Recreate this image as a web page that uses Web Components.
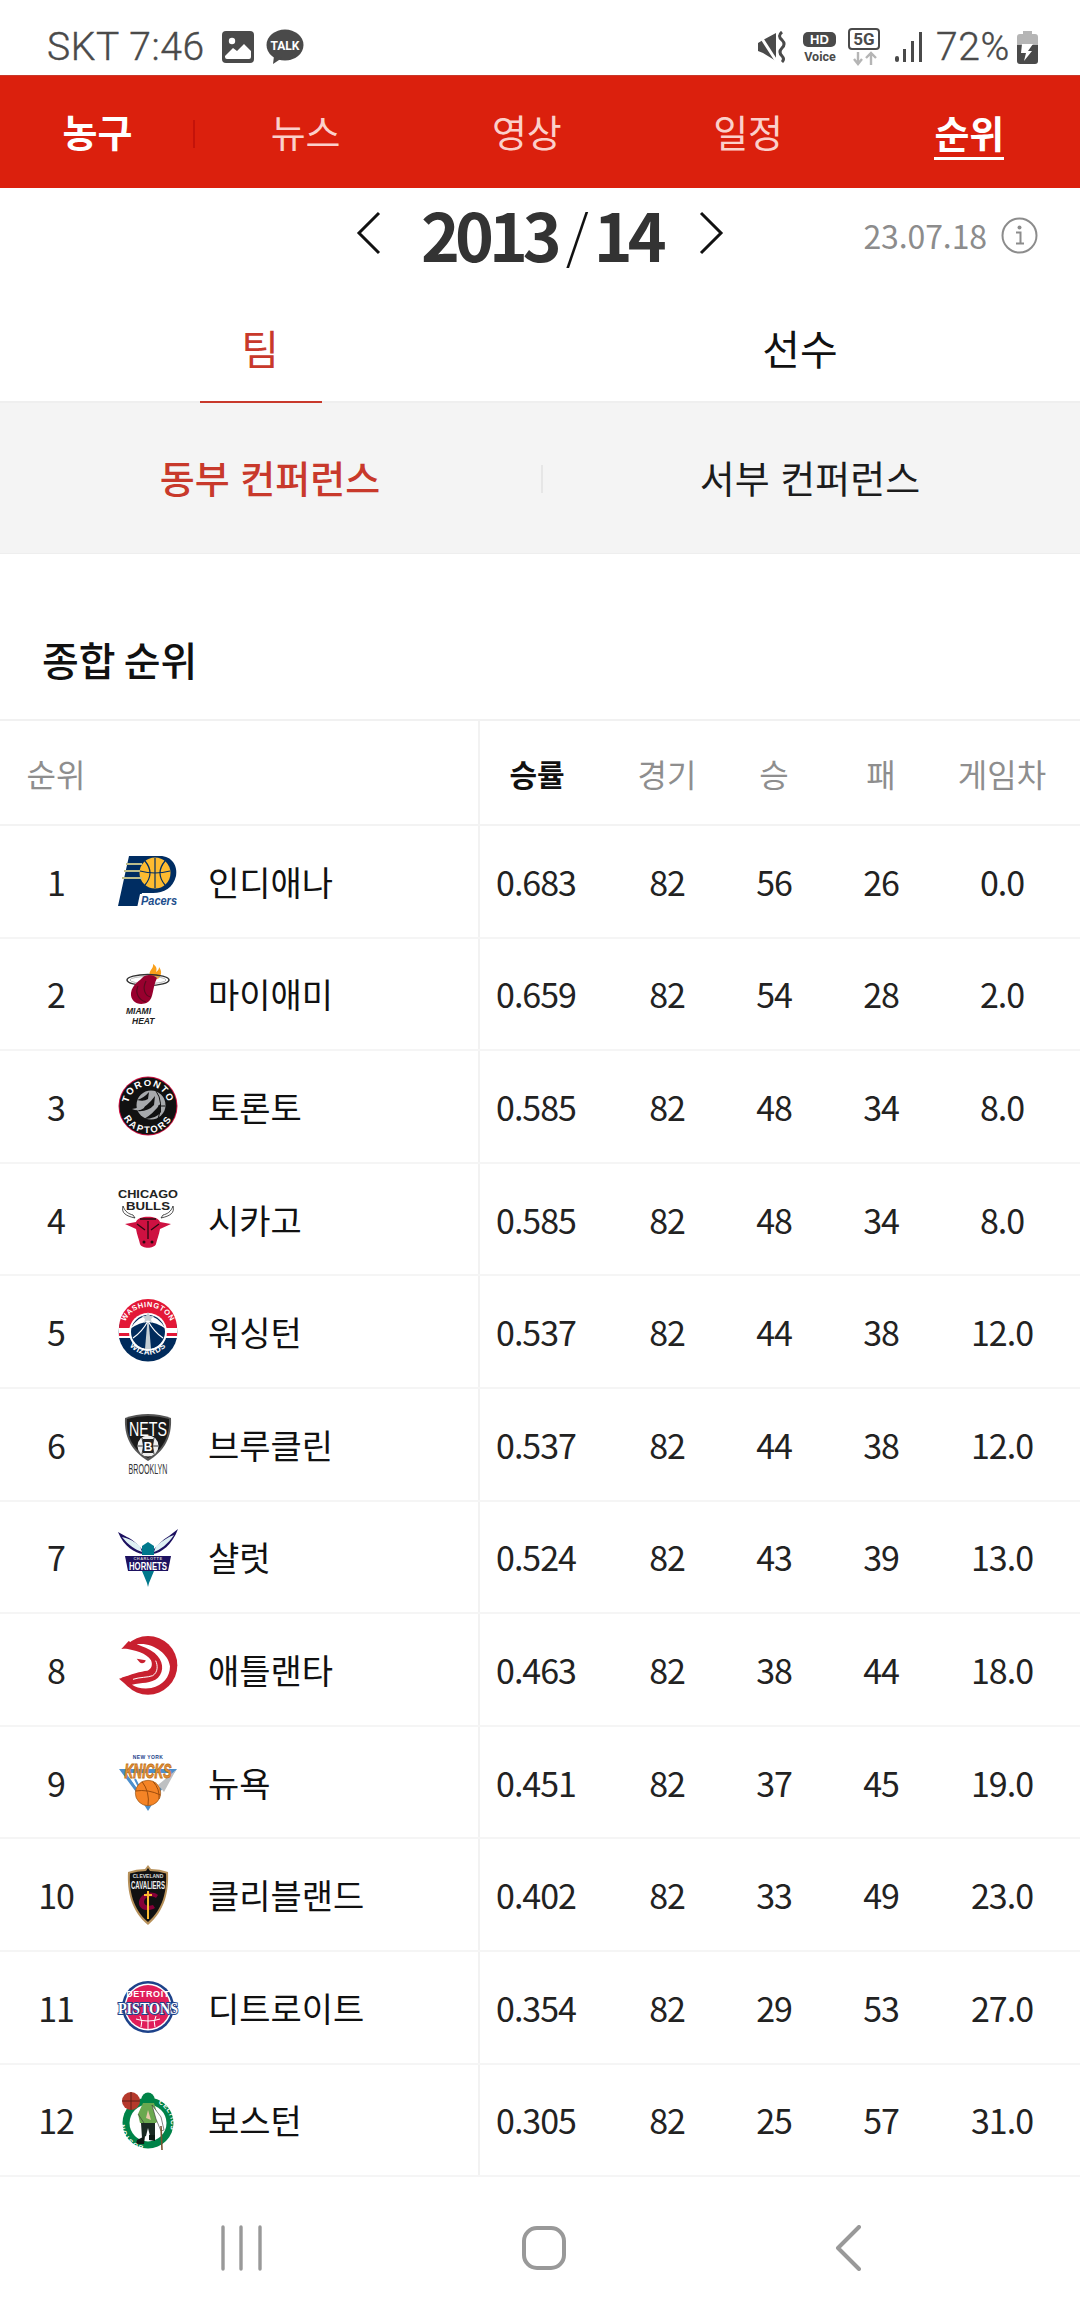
<!DOCTYPE html>
<html lang="ko">
<head>
<meta charset="utf-8">
<title>순위</title>
<style>
  html, body { margin: 0; padding: 0; background: #fff; }
  body { width: 1080px; height: 2316px; overflow: hidden; font-family: "Noto Sans CJK KR", "Noto Sans", sans-serif; }
</style>
</head>
<body>
<status-bar></status-bar>
<top-nav></top-nav>
<season-bar></season-bar>
<main-tabs></main-tabs>
<conf-tabs></conf-tabs>
<standings-table></standings-table>
<nav-bar></nav-bar>

<script>
const KR = '"Noto Sans CJK KR", "Noto Sans", sans-serif';

class StatusBar extends HTMLElement {
  constructor() {
    super();
    this.attachShadow({mode: 'open'}).innerHTML = `
      <style>
        :host { display: flex; align-items: center; height: 75px; padding: 19px 42px 0 47px; box-sizing: border-box; color: #4a4a4a; font-family: "Roboto", sans-serif; }
        .txt { font-size: 39px; line-height: 1; font-weight: 300; -webkit-text-stroke: 0.4px #4a4a4a; letter-spacing: 0.6px; }
        .left, .right { display: flex; align-items: center; }
        .right { margin-left: auto; }
        svg { display: block; }
      </style>
      <div class="left">
        <span class="txt">SKT 7:46</span>
        <svg style="margin-left:17px" width="32" height="32" viewBox="0 0 32 32"><rect width="32" height="32" rx="4" fill="#4a4a4a"/><circle cx="10" cy="10" r="3.2" fill="#fff"/><path d="M3 25 L11 17 L15 20 L22 13 L29 20 V26 Q29 28 27 28 H5 Q3 28 3 26Z" fill="#fff"/></svg>
        <svg style="margin-left:12px" width="38" height="36" viewBox="0 0 38 36"><ellipse cx="19" cy="16" rx="18.5" ry="15.5" fill="#4a4a4a"/><path d="M8 27 L7 35 L16 29Z" fill="#4a4a4a"/><text x="19" y="21" font-size="12" font-weight="700" font-family="Roboto,sans-serif" fill="#fff" text-anchor="middle">TALK</text></svg>
      </div>
      <div class="right">
        <svg width="30" height="32" viewBox="0 0 30 32"><path d="M1 12 L6 9 L19 2 V30 L6 22 L1 20Z" fill="#4a4a4a"/><path d="M2 3 L20 31" stroke="#fff" stroke-width="3"/><path d="M25 1 Q20 5 25 9 Q29 13 25 17 Q21 21 25 25 Q28 28 25 31" fill="none" stroke="#4a4a4a" stroke-width="3"/></svg>
        <svg style="margin-left:16px" width="34" height="32" viewBox="0 0 34 32"><rect y="1" width="33" height="15" rx="5" fill="#4a4a4a"/><text x="16.5" y="13" font-size="13" font-weight="900" font-family="Liberation Sans,sans-serif" fill="#fff" text-anchor="middle">HD</text><text x="17" y="30" font-size="12.5" font-weight="700" font-family="Roboto,sans-serif" fill="#4a4a4a" text-anchor="middle">Voice</text></svg>
        <svg style="margin-left:11px" width="33" height="38" viewBox="0 0 33 38"><rect x="1" y="1" width="30" height="20" rx="3" fill="none" stroke="#4a4a4a" stroke-width="2"/><text x="16" y="17" font-size="17" font-weight="700" font-family="Roboto,sans-serif" fill="#4a4a4a" text-anchor="middle">5G</text><path d="M10 24 V36 M6 31 L10 36 L14 31" fill="none" stroke="#b5b5b5" stroke-width="2.4"/><path d="M23 37 V25 M18 30 L23 25 L28 30" fill="none" stroke="#b5b5b5" stroke-width="2.4"/></svg>
        <svg style="margin-left:14px" width="28" height="32" viewBox="0 0 28 32"><rect x="0" y="25" width="4" height="6" rx="2" fill="#4a4a4a"/><rect x="8" y="18" width="3" height="13" fill="#4a4a4a"/><rect x="16" y="10" width="3" height="21" fill="#4a4a4a"/><rect x="24" y="1" width="3" height="30" fill="#4a4a4a"/></svg>
        <span class="txt" style="margin-left:13px">72%</span>
        <svg style="margin-left:7px" width="21" height="33" viewBox="0 0 21 33"><path d="M6 0 H15 V3 H18 Q21 3 21 6 V14 H0 V6 Q0 3 3 3 H6Z" fill="#b5b5b5"/><path d="M0 14 H21 V30 Q21 33 18 33 H3 Q0 33 0 30Z" fill="#4a4a4a"/><path d="M5 13 H16 L11 20 H15 L7 30 L9 22 H4Z" fill="#fff"/></svg>
      </div>`;
  }
}
customElements.define('status-bar', StatusBar);

class TopNav extends HTMLElement {
  constructor() {
    super();
    const items = ['뉴스', '영상', '일정', '순위'];
    this.attachShadow({mode: 'open'}).innerHTML = `
      <style>
        :host { display: grid; grid-template-columns: 195px repeat(4, 1fr); height: 113px; background: #db200d; font-family: ${KR}; border-top: 1px solid #c9382a; box-sizing: border-box; }
        div { display: flex; align-items: center; justify-content: center; color: #fbd0cb; font-size: 38px; position: relative; padding-bottom: 4px; box-sizing: border-box; }
        .home { color: #fff; font-weight: 700; }
        .home::after { content: ""; position: absolute; right: 0; top: 44px; height: 28px; width: 2px; background: #c4130a; }
        .on { color: #fff; font-weight: 700; }
        .on span { border-bottom: 3px solid #fff; line-height: 50px; height: 50px; display: block; margin-top: 6px; }
      </style>
      <div class="home">농구</div>
      ${items.map(t => `<div class="${t === '순위' ? 'on' : ''}"><span>${t}</span></div>`).join('')}`;
  }
}
customElements.define('top-nav', TopNav);

class SeasonBar extends HTMLElement {
  constructor() {
    super();
    this.attachShadow({mode: 'open'}).innerHTML = `
      <style>
        :host { display: block; position: relative; height: 94px; font-family: ${KR}; }
        .mid { display: flex; align-items: center; justify-content: center; height: 94px; gap: 39px; padding-bottom: 4px; box-sizing: border-box; }
        .year { font-size: 66px; font-weight: 700; color: #333; line-height: 1; letter-spacing: -5px; width: 238px; text-align: left; white-space: nowrap; }
        .year i { font-style: normal; font-weight: 300; color: #111; font-size: 58px; margin: 0 5px 0 9px; letter-spacing: 0; }
        .date { position: absolute; right: 42px; top: 0; height: 94px; display: flex; align-items: center; gap: 14px; color: #8c8c8c; font-size: 32px; }
        .date span { letter-spacing: -0.1px; }
        svg { display: block; }
      </style>
      <div class="mid">
        <svg width="26" height="44" viewBox="0 0 26 44"><path d="M23 2 L3 22 L23 42" fill="none" stroke="#111" stroke-width="3"/></svg>
        <div class="year">2013<i>/</i>14</div>
        <svg width="26" height="44" viewBox="0 0 26 44"><path d="M3 2 L23 22 L3 42" fill="none" stroke="#111" stroke-width="3"/></svg>
      </div>
      <div class="date"><span>23.07.18</span>
        <svg width="37" height="37" viewBox="0 0 37 37"><circle cx="18.5" cy="18.5" r="17" fill="none" stroke="#8c8c8c" stroke-width="2"/><circle cx="18.5" cy="10.5" r="2" fill="#8c8c8c"/><path d="M15 15.5 H19.5 V26 M15 26.5 H23" fill="none" stroke="#8c8c8c" stroke-width="2"/></svg>
      </div>`;
  }
}
customElements.define('season-bar', SeasonBar);

class MainTabs extends HTMLElement {
  constructor() {
    super();
    this.attachShadow({mode: 'open'}).innerHTML = `
      <style>
        :host { display: grid; grid-template-columns: 1fr 1fr; gap: 20px; height: 121px; border-bottom: 2px solid #efefef; box-sizing: border-box; font-family: ${KR}; padding-right: 20px; }
        div { display: flex; justify-content: center; align-items: center; font-size: 41px; color: #111; padding-top: 11px; position: relative; box-sizing: border-box; }
        .on { color: #c8392b; }
        .on::after { content: ""; position: absolute; left: 50%; margin-left: -60px; width: 122px; bottom: -2px; height: 2px; background: #c8392b; }
      </style>
      <div class="on">팀</div><div>선수</div>`;
  }
}
customElements.define('main-tabs', MainTabs);

class ConfTabs extends HTMLElement {
  constructor() {
    super();
    this.attachShadow({mode: 'open'}).innerHTML = `
      <style>
        :host { display: grid; grid-template-columns: 1fr 1fr; height: 151px; background: #f4f4f4; border-bottom: 1px solid #eeeeee; box-sizing: border-box; font-family: ${KR}; }
        div { display: flex; justify-content: center; align-items: center; font-size: 38px; color: #1c1c1c; position: relative; padding-bottom: 3px; box-sizing: border-box; }
        .on { color: #c8392b; font-weight: 500; }
        .on::after { content: ""; position: absolute; right: -3px; top: 62px; height: 28px; width: 2px; background: #e6e6e6; }
      </style>
      <div class="on">동부 컨퍼런스</div><div>서부 컨퍼런스</div>`;
  }
}
customElements.define('conf-tabs', ConfTabs);

const SVGS = {
  pacers: `<path d="M11 5 H42 C54 5 60 15 58 25 C55 37 46 42 35 42 H24 L20 55 H0Z" fill="#002d62"/><circle cx="37" cy="22" r="15.5" fill="#fdbb30"/><path d="M22 20 Q37 24 52 20 M37 7 V37 M27 10 Q37 22 27 34 M47 10 Q37 22 47 34" fill="none" stroke="#002d62" stroke-width="1.2"/><path d="M8 13 H24 M6 20 H22 M4 27 H24" stroke="#bcbd8b" stroke-width="2"/><path d="M22 43 H60 V57 H19Z" fill="#fff"/><text x="23" y="54" font-size="12.5" font-style="italic" font-weight="700" font-family="Liberation Sans,sans-serif" fill="#204d8c" textLength="36" lengthAdjust="spacingAndGlyphs">Pacers</text>`,
  heat: `<path d="M32 12 C30 6 36 5 35 0 C39 3 39 5 38 8 C41 6 41 4 41 3 C44 7 44 11 40 15Z" fill="#f9a01b"/><ellipse cx="30" cy="16" rx="21" ry="5.5" fill="none" stroke="#333" stroke-width="1.5"/><ellipse cx="30" cy="16" rx="18" ry="3.5" fill="none" stroke="#aaa" stroke-width=".8"/><path d="M24 14 C23 16 14 20 13 29 C12 38 22 43 30 38 C36 34 34 24 39 14 C35 10 27 10 24 14Z" fill="#98002e"/><path d="M20 22 C17 28 20 36 28 38 M28 17 C24 25 27 32 33 33" fill="none" stroke="#5b0a1f" stroke-width="1.2"/><text x="8" y="50" font-size="8.5" font-weight="900" font-style="italic" font-family="Liberation Sans,sans-serif" fill="#222">MIAMI</text><text x="14" y="60" font-size="8.5" font-weight="900" font-style="italic" font-family="Liberation Sans,sans-serif" fill="#222">HEAT</text>`,
  raptors: `<circle cx="30" cy="30" r="29.5" fill="#ce1141"/><circle cx="30" cy="30" r="28.5" fill="#111"/><circle cx="33" cy="29" r="14.5" fill="#a7a9ac"/><path d="M19 24 Q26 22 31 16 L30 23 Q26 26 19 24Z M19 35 Q29 31 37 20 L36 29 Q30 36 19 35Z M26 43 Q35 38 43 27 L43 36 Q38 43 26 43Z" fill="#111"/><path d="M38 15 Q46 26 40 43 M47 30 H40" fill="none" stroke="#111" stroke-width="1"/><path d="M14 33 Q22 32 28 26 L26 32 Q21 36 14 33Z" fill="#a7a9ac"/><defs><path id="rt" d="M10 30 A20 20 0 0 1 50 30"/><path id="rb" d="M3 30 A27 27 0 0 0 57 30"/></defs><text font-size="9.5" font-weight="700" font-family="Liberation Sans,sans-serif" fill="#fff" letter-spacing="1.3"><textPath href="#rt" startOffset="50%" text-anchor="middle">TORONTO</textPath></text><text font-size="9.5" font-weight="700" font-family="Liberation Sans,sans-serif" fill="#fff" letter-spacing="2"><textPath href="#rb" startOffset="50%" text-anchor="middle">RAPTORS</textPath></text>`,
  bulls: `<text x="30" y="9" font-size="10.4" font-weight="700" font-family="Liberation Sans,sans-serif" fill="#222" text-anchor="middle" textLength="60" lengthAdjust="spacingAndGlyphs">CHICAGO</text><text x="30" y="21" font-size="10.4" font-weight="700" font-family="Liberation Sans,sans-serif" fill="#222" text-anchor="middle" textLength="44" lengthAdjust="spacingAndGlyphs">BULLS</text><path d="M5 17 C3 24 8 27 17 29 L15 26 C11 25 7 23 5 17Z M55 17 C57 24 52 27 43 29 L45 26 C49 25 53 23 55 17Z" fill="#fff" stroke="#222" stroke-width=".8"/><path d="M7 35 L18 33 C20 26 40 26 42 33 L53 35 L42 40 C41 46 39 50 38 55 C36 60 24 60 22 55 C21 50 19 46 18 40Z" fill="#ce1141"/><path d="M19 35 L27 41 M41 35 L33 41 M30 32 V50 M22 30 H38" fill="none" stroke="#2a0a10" stroke-width="1.3"/><circle cx="26" cy="53" r="1.5" fill="#2a0a10"/><circle cx="34" cy="53" r="1.5" fill="#2a0a10"/>`,
  wizards: `<circle cx="30" cy="30" r="29.5" fill="#002b5c"/><path d="M1 26 A29 29 0 0 1 59 26Z" fill="#e31837"/><path d="M0.5 26 H59.5 V36 H0.5Z" fill="#fff"/><path d="M1 31 H59 V34 H1Z" fill="#e31837"/><circle cx="30" cy="30" r="19" fill="#fff"/><circle cx="30" cy="30" r="17" fill="#002b5c"/><path d="M12 27 Q20 14 30 14 Q40 14 48 27 Q38 20 30 20 Q22 20 12 27Z" fill="#fff"/><path d="M30 12 L33 47 H27Z" fill="#c4ced4"/><path d="M30 19 Q24 30 15 36 M30 19 Q36 30 45 36" fill="none" stroke="#fff" stroke-width="1.2"/><path d="M30 10 L32 14 L36 14 L33 17 L34 21 L30 18 L26 21 L27 17 L24 14 L28 14Z" fill="#c4ced4"/><defs><path id="wt" d="M5 30 A25 25 0 0 1 55 30"/><path id="wb" d="M7 34 A23.5 23.5 0 0 0 53 34"/></defs><text font-size="7.5" font-weight="700" font-family="Liberation Sans,sans-serif" fill="#fff" letter-spacing=".5"><textPath href="#wt" startOffset="50%" text-anchor="middle">WASHINGTON</textPath></text><text font-size="8" font-weight="700" font-family="Liberation Sans,sans-serif" fill="#fff" letter-spacing=".6"><textPath href="#wb" startOffset="50%" text-anchor="middle">WIZARDS</textPath></text>`,
  nets: `<path d="M30 0 Q42 0 53 4 C54 22 47 37 30 47 C13 37 6 22 7 4 Q18 0 30 0Z" fill="#555"/><path d="M30 2 Q41 2 51 5 C52 21 46 35 30 44 C14 35 8 21 9 5 Q19 2 30 2Z" fill="#1a1a1a"/><text x="30" y="22" font-size="21" font-family="Liberation Sans,sans-serif" fill="#fff" text-anchor="middle" textLength="38" lengthAdjust="spacingAndGlyphs">NETS</text><circle cx="30" cy="32" r="10.5" fill="#eee"/><path d="M20 32 H40 M24 24 Q27 32 24 40 M36 24 Q33 32 36 40" fill="none" stroke="#333" stroke-width="1"/><rect x="25" y="25" width="10" height="14" fill="#222"/><text x="30" y="37" font-size="12" font-weight="700" font-family="Liberation Sans,sans-serif" fill="#fff" text-anchor="middle">B</text><text x="30" y="60" font-size="14" font-family="Liberation Sans,sans-serif" fill="#333" text-anchor="middle" textLength="39" lengthAdjust="spacingAndGlyphs">BROOKLYN</text>`,
  hornets: `<path d="M0 5 L9 10 C16 13 21 19 25 23 L25 27 C17 26 6 20 0 5Z M60 2 L51 9 C44 13 39 19 35 23 L35 27 C43 26 54 18 60 2Z" fill="#1d1160"/><path d="M4 10 C10 18 18 23 24 25 L22 19 C16 14 10 11 4 10Z M56 8 C50 17 42 23 36 25 L38 19 C44 14 50 10 56 8Z" fill="#dff1f4"/><path d="M24 19 L30 15 L36 19 L36 28 L24 28Z" fill="#00788c"/><path d="M7 29 H53 L50 44 H10Z" fill="#1d1160"/><text x="30" y="33" font-size="4" font-weight="700" font-family="Liberation Sans,sans-serif" fill="#ccc" text-anchor="middle" letter-spacing=".5">CHARLOTTE</text><text x="30" y="43" font-size="11" font-weight="700" font-family="Liberation Sans,sans-serif" fill="#fff" text-anchor="middle" textLength="38" lengthAdjust="spacingAndGlyphs">HORNETS</text><path d="M24 44 H36 L31 56 L30 60 L29 56Z" fill="#00788c"/>`,
  hawks: `<g transform="scale(.3333) translate(-30 -36)"><circle cx="120" cy="115" r="88" fill="#c8202f"/><path d="M20 20 H48 L46 63 C82 70 116 78 129 100 C135 115 130 127 118 131 C98 133 72 141 33 155 L20 215 Z" fill="#fff"/><path d="M33 155 L84 141 L62 180Z" fill="#c8202f"/><path d="M40 66 L62 42 L90 60Z" fill="#c8202f"/><path d="M86 52 C130 44 182 78 186 118 C186 150 165 176 130 183 C106 187 84 182 72 173 C100 166 130 170 150 152 C170 132 166 100 140 78 C122 64 104 59 86 52Z" fill="#fff"/><path d="M86 95 L113 100 C112 109 100 111 95 106Z" fill="#c8202f"/><path d="M75 157 C95 150 118 152 134 146 C150 136 150 116 143 101" fill="none" stroke="#fff" stroke-width="3"/></g>`,
  knicks: `<path d="M1 17 L59 17 L42 40 L30 59 L18 40Z" fill="#4d8fcc"/><path d="M8 21 L52 21 L30 52Z" fill="#fff"/><path d="M40 33 L58 18 L46 40Z" fill="#bec0c2"/><path d="M11 27 L20 40 M17 27 L24 41" stroke="#4d8fcc" stroke-width="2"/><text x="30" y="7" font-size="5" font-weight="700" font-family="Liberation Sans,sans-serif" fill="#1d428a" text-anchor="middle" letter-spacing=".4">NEW YORK</text><text x="30" y="26" font-size="21" font-weight="700" font-style="italic" font-family="Liberation Sans,sans-serif" fill="#e8923a" stroke="#c07420" stroke-width="1" text-anchor="middle" textLength="47" lengthAdjust="spacingAndGlyphs">KNICKS</text><circle cx="30" cy="41" r="12.7" fill="#f58426" stroke="#8a5018" stroke-width=".6"/><path d="M17.5 39 Q30 37 42.5 43 M24 29.5 Q32 40 30 53.5 M35 29.5 Q42 37 41 47" fill="none" stroke="#9c4c0c" stroke-width="1"/>`,
  cavs: `<path d="M30 0 L33 4 Q42 4 50 7 C51 26 47 46 30 60 C13 46 9 26 10 7 Q18 4 27 4Z" fill="#b7915a"/><path d="M30 3 L32 6 Q41 6 48 8.5 C49 26 45 44 30 57 C15 44 11 26 12 8.5 Q19 6 28 6Z" fill="#111"/><text x="30" y="13" font-size="5" font-weight="700" font-family="Liberation Sans,sans-serif" fill="#ddd" text-anchor="middle">CLEVELAND</text><text x="30" y="24" font-size="10" font-weight="700" font-family="Liberation Sans,sans-serif" fill="#eee" text-anchor="middle" textLength="34" lengthAdjust="spacingAndGlyphs">CAVALIERS</text><path d="M40 30 C32 24 20 30 21 39 C22 45 30 47 37 43 L35 40 C30 42 26 40 26 37 C26 32 33 30 38 33Z" fill="#860038"/><path d="M30 26 V54 M26 30 H34" stroke="#fdbb30" stroke-width="2"/>`,
  pistons: `<circle cx="30" cy="30" r="26" fill="#1d428a"/><circle cx="30" cy="30" r="23.5" fill="#fff"/><circle cx="30" cy="30" r="22" fill="#e01e5a"/><path d="M18 42 Q30 46 42 42 M30 38 V52 M22 39 Q25 45 23 50 M38 39 Q35 45 37 50" fill="none" stroke="#fff" stroke-width="1"/><text x="30" y="20" font-size="9" font-weight="700" font-family="Liberation Sans,sans-serif" fill="#fff" text-anchor="middle" letter-spacing=".6">DETROIT</text><text x="30" y="37" font-size="17" font-weight="700" font-family="Liberation Serif,serif" fill="#fff" stroke="#1d428a" stroke-width="2" paint-order="stroke" text-anchor="middle" textLength="60" lengthAdjust="spacingAndGlyphs">PISTONS</text>`,
  celtics: `<circle cx="30" cy="33" r="25.5" fill="#008348"/><circle cx="30" cy="33" r="18.5" fill="#fff"/><circle cx="13" cy="11" r="9" fill="#b5392c"/><path d="M4 11 H22 M13 2 V20" stroke="#5a1c14" stroke-width=".9"/><circle cx="30" cy="9" r="6.5" fill="#008348"/><path d="M25 13 H36 L41 29 L38 33 H22 L20 24Z" fill="#6aa84f"/><path d="M20 24 L26 33 M34 15 L43 27 L46 40 L43 41 L38 29Z" fill="#fff" stroke="#333" stroke-width=".6"/><path d="M23 33 H37 L37 46 H32 L30 38 L28 46 L24 48Z" fill="#1a2a22"/><path d="M19 50 L27 46 L26 54 L18 54Z M31 45 L37 45 L37 51 L31 50Z" fill="#0e1a14"/><path d="M43 36 L44 60" stroke="#7a5230" stroke-width="1.6"/><path d="M30 20 L28 28 L33 30Z" fill="#e7c9a9"/><defs><path id="cl" d="M30 56 A22.5 22.5 0 0 1 14 17"/><path id="cr" d="M36 12 A22.5 22.5 0 0 1 48 48"/></defs><text font-size="6.5" font-weight="700" font-family="Liberation Sans,sans-serif" fill="#fff" letter-spacing=".6"><textPath href="#cl" startOffset="8%">BOSTON</textPath></text><text font-size="6.5" font-weight="700" font-family="Liberation Sans,sans-serif" fill="#fff" letter-spacing=".6"><textPath href="#cr" startOffset="10%">CELTICS</textPath></text>`
};

class TeamLogo extends HTMLElement {
  constructor() {
    super();
    this.attachShadow({mode: 'open'});
  }
  connectedCallback() {
    this.shadowRoot.innerHTML = `
      <style>:host { display: block; width: 60px; height: 60px; } svg { display: block; overflow: visible; }</style>
      <svg width="60" height="60" viewBox="0 0 60 60">${SVGS[this.getAttribute('team')]}</svg>`;
  }
}
customElements.define('team-logo', TeamLogo);

const GRID = `display: grid; grid-template-columns: 112px 96px 270px 116px 146px 68px 146px 126px; box-sizing: border-box;`;

class StandingRow extends HTMLElement {
  constructor() {
    super();
    this.attachShadow({mode: 'open'});
  }
  set team(t) {
    this.shadowRoot.innerHTML = `
      <style>
        :host { ${GRID} height: 112.6px; border-bottom: 2px solid #f5f5f5; align-items: center; font-family: ${KR}; color: #222; font-size: 34px; }
        .c { text-align: center; }
        .gb { padding-right: 30px; }
        .name { color: #111; white-space: nowrap; }
        .rate { border-left: 2px solid #f2f2f2; height: 100%; display: flex; align-items: center; justify-content: center; box-sizing: border-box; padding-right: 2px; }
        team-logo { margin-left: 6px; }
        .num { letter-spacing: -1px; }
      </style>
      <div class="c num">${t[0]}</div>
      <team-logo team="${t[1]}"></team-logo>
      <div class="name">${t[2]}</div>
      <div class="rate num">${t[3]}</div>
      <div class="c num">82</div>
      <div class="c num">${t[4]}</div>
      <div class="c num">${t[5]}</div>
      <div class="c gb num">${t[6]}</div>`;
  }
}
customElements.define('standing-row', StandingRow);

class StandingsTable extends HTMLElement {
  constructor() {
    super();
    const root = this.attachShadow({mode: 'open'});
    root.innerHTML = `
      <style>
        :host { display: block; font-family: ${KR}; }
        h2 { margin: 0; height: 167px; padding: 44px 0 0 42px; box-sizing: border-box; display: flex; align-items: center; font-size: 40px; font-weight: 500; word-spacing: -3px; color: #111; border-bottom: 2px solid #f1f1f1; }
        .head { ${GRID} height: 105px; border-bottom: 2px solid #f3f3f3; align-items: center; font-size: 32px; color: #8e8e8e; }
        .head > div { text-align: center; }
        .fill { grid-column: span 2; }
        .head .sort { color: #111; font-weight: 700; border-left: 2px solid #f2f2f2; height: 100%; display: flex; align-items: center; justify-content: center; box-sizing: border-box; font-size: 30px; }
        .gb { padding-right: 30px; white-space: nowrap; }
      </style>
      <h2>종합 순위</h2>
      <div class="head">
        <div>순위</div><div class="fill"></div>
        <div class="sort">승률</div><div>경기</div><div>승</div><div>패</div><div class="gb">게임차</div>
      </div>
      <div id="rows"></div>`;
    const teams = [
      [1, 'pacers', '인디애나', '0.683', 56, 26, '0.0'],
      [2, 'heat', '마이애미', '0.659', 54, 28, '2.0'],
      [3, 'raptors', '토론토', '0.585', 48, 34, '8.0'],
      [4, 'bulls', '시카고', '0.585', 48, 34, '8.0'],
      [5, 'wizards', '워싱턴', '0.537', 44, 38, '12.0'],
      [6, 'nets', '브루클린', '0.537', 44, 38, '12.0'],
      [7, 'hornets', '샬럿', '0.524', 43, 39, '13.0'],
      [8, 'hawks', '애틀랜타', '0.463', 38, 44, '18.0'],
      [9, 'knicks', '뉴욕', '0.451', 37, 45, '19.0'],
      [10, 'cavs', '클리블랜드', '0.402', 33, 49, '23.0'],
      [11, 'pistons', '디트로이트', '0.354', 29, 53, '27.0'],
      [12, 'celtics', '보스턴', '0.305', 25, 57, '31.0']
    ];
    const wrap = root.getElementById('rows');
    teams.forEach(t => {
      const row = document.createElement('standing-row');
      row.team = t;
      wrap.appendChild(row);
    });
  }
}
customElements.define('standings-table', StandingsTable);

class NavBar extends HTMLElement {
  constructor() {
    super();
    this.attachShadow({mode: 'open'}).innerHTML = `
      <style>
        :host { display: grid; grid-template-columns: 403px 282px 1fr; position: absolute; left: 0; right: 0; bottom: 0; height: 136px; background: #fff; align-items: center; box-sizing: border-box; }
        svg { display: block; }
        .a { margin-left: 219px; }
        .b { margin-left: 118px; }
        .c { margin-left: 149px; }
      </style>
      <svg class="a" width="46" height="46" viewBox="0 0 46 46"><path d="M4 2 V44 M22 2 V44 M41 2 V44" stroke="#999" stroke-width="3.4" stroke-linecap="round"/></svg>
      <svg class="b" width="46" height="46" viewBox="0 0 46 46"><rect x="3" y="3" width="40" height="40" rx="13" fill="none" stroke="#999" stroke-width="4"/></svg>
      <svg class="c" width="28" height="46" viewBox="0 0 28 46"><path d="M25 2 L4 23 L25 44" fill="none" stroke="#999" stroke-width="4" stroke-linecap="round" stroke-linejoin="round"/></svg>`;
  }
}
customElements.define('nav-bar', NavBar);
</script>
</body>
</html>
